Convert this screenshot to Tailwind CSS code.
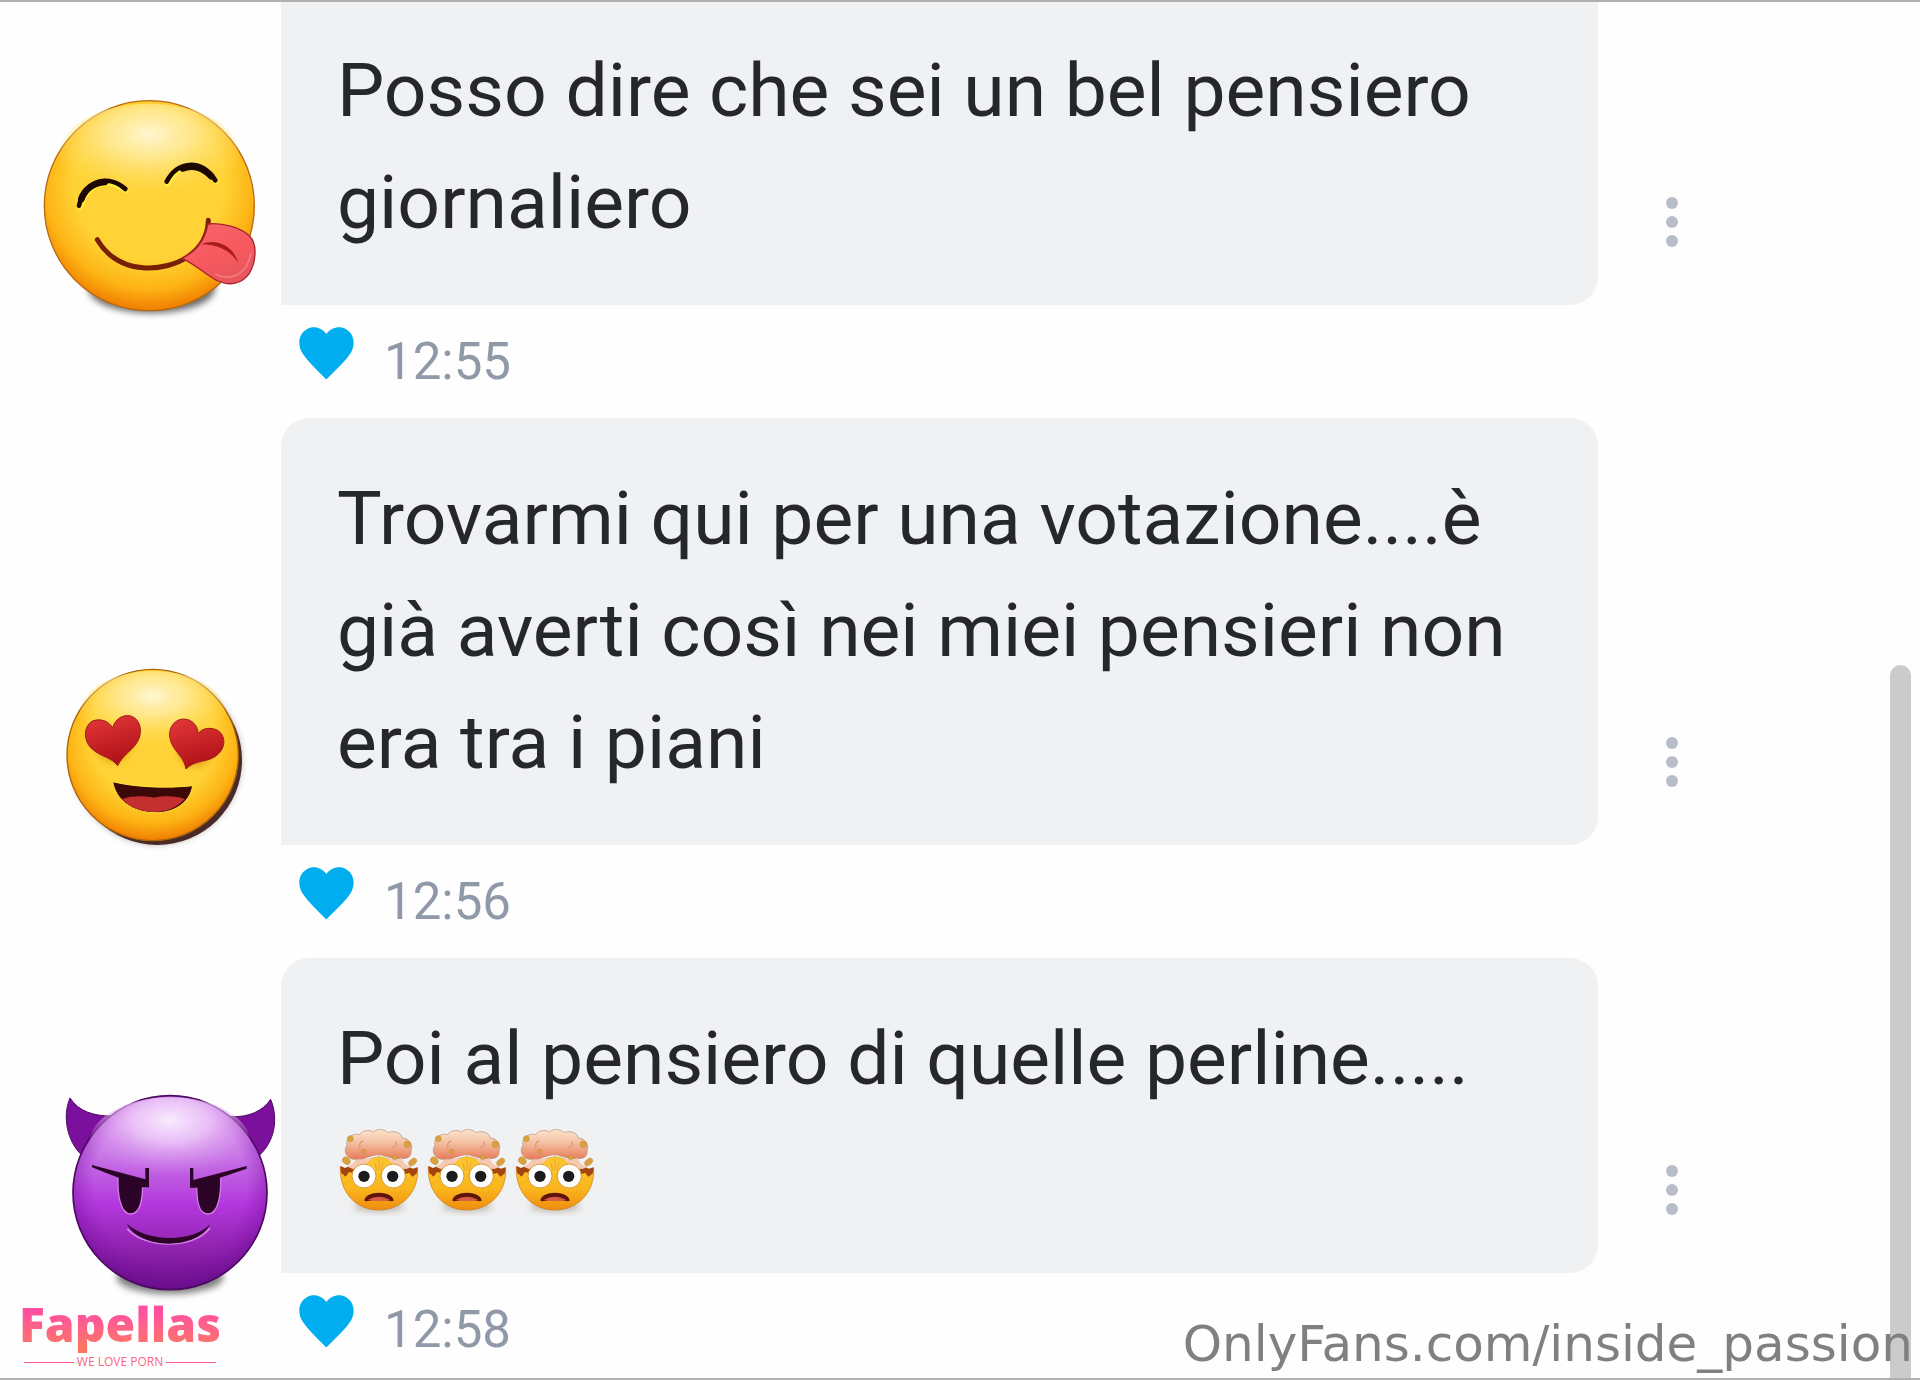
<!DOCTYPE html>
<html lang="it">
  <head>
    <meta charset="UTF-8" />
    <meta name="viewport" content="width=device-width, initial-scale=1.0">
    <title>Chat</title>
    <script src="https://cdn.jsdelivr.net/npm/@tailwindcss/browser@4"></script>
  </head>
  <body class="bg-[#fefefe] font-[Roboto,sans-serif] text-[#25272b]">
    <!-- shared shapes -->
    <svg class="absolute size-0" aria-hidden="true">
      <defs>
        <radialGradient id="face" cx=".5" cy=".4" r=".62">
          <stop offset="0" stop-color="#ffd338" />
          <stop offset=".58" stop-color="#ffd235" />
          <stop offset=".8" stop-color="#fdb414" />
          <stop offset=".97" stop-color="#f07c00" />
        </radialGradient>
        <radialGradient id="shine" cx=".5" cy=".3" r=".6">
          <stop offset="0" stop-color="#fff6d2" />
          <stop offset=".4" stop-color="#ffeea6" stop-opacity=".75" />
          <stop offset="1" stop-color="#ffe160" stop-opacity="0" />
        </radialGradient>
        <linearGradient id="tongue" x1="0" y1="0" x2=".4" y2="1">
          <stop offset="0" stop-color="#f4666c" />
          <stop offset=".6" stop-color="#f8595f" />
          <stop offset="1" stop-color="#e8565c" />
        </linearGradient>
        <linearGradient id="red" x1="0" y1="0" x2=".3" y2="1">
          <stop offset="0" stop-color="#e5383b" />
          <stop offset="1" stop-color="#b01218" />
        </linearGradient>
        <linearGradient id="purple" x1="0" y1="0" x2="0" y2="1">
          <stop offset="0" stop-color="#d58cec" />
          <stop offset=".3" stop-color="#c875e6" />
          <stop offset=".57" stop-color="#b236dc" />
          <stop offset=".8" stop-color="#8e22ac" />
          <stop offset="1" stop-color="#651080" />
        </linearGradient>
        <radialGradient id="purpleEdge" cx=".5" cy=".45" r=".56">
          <stop offset=".7" stop-color="#8a12b8" stop-opacity="0" />
          <stop offset="1" stop-color="#6a0a90" stop-opacity=".65" />
        </radialGradient>
        <radialGradient id="purpleShine" cx=".5" cy=".26" r=".62">
          <stop offset="0" stop-color="#f9ecff" />
          <stop offset=".4" stop-color="#efcdfa" stop-opacity=".8" />
          <stop offset="1" stop-color="#d58cec" stop-opacity="0" />
        </radialGradient>
        <linearGradient id="smoke" x1="0" y1="0" x2="0" y2="1">
          <stop offset="0" stop-color="#fbe6cf" />
          <stop offset=".45" stop-color="#f3bfa1" />
          <stop offset="1" stop-color="#e77a58" />
        </linearGradient>
        <linearGradient id="bowl" x1="0" y1="0" x2="0" y2="1">
          <stop offset="0" stop-color="#fdc52c" />
          <stop offset=".6" stop-color="#fbb61d" />
          <stop offset="1" stop-color="#ee8c10" />
        </linearGradient>
        <filter id="soft" x="-20%" y="-30%" width="140%" height="160%">
          <feGaussianBlur stdDeviation="11" />
        </filter>
        <symbol id="heart" viewBox="55 81 167 160">
          <path fill="#00aeef" d="M138 102C124 82 98 76 79 87C52 101 50 137 66 161C80 183 108 209 138 240C168 209 197 183 211 161C227 137 224 101 198 87C178 76 152 82 138 102Z" />
        </symbol>
        <symbol id="dots" viewBox="0 0 14 52">
          <g fill="#b8bec8">
            <circle cx="7" cy="7" r="6" /><circle cx="7" cy="26" r="6" /><circle cx="7" cy="45" r="6" />
          </g>
        </symbol>
        <symbol id="mindblown" viewBox="54 12 264 336">
          <ellipse cx="180" cy="288" rx="75" ry="17" fill="#8b7b68" opacity=".5" filter="url(#soft)" />
          <path fill="url(#bowl)" stroke="#c77a14" stroke-width="2" d="M64 170L84 182L112 172L140 150L180 140L222 150L254 172L276 184L296 174C300 246 250 300 180 300C110 300 60 246 64 170Z" />
          <path fill="#a4440f" d="M64 168L78 174L88 170L102 178L116 176L104 190L90 186L80 200L66 188ZM296 172L282 176L268 170L254 178L246 182L260 192L270 188L280 200L294 190Z" />
          <path fill="#f6c9b2" d="M84 168Q104 164 112 146L250 146Q254 164 276 170Q262 182 244 174L116 172Q98 180 84 168Z" />
          <path fill="url(#smoke)" stroke="#b98a6c" stroke-width="2" d="M104 148C82 146 72 122 84 106C78 82 104 68 122 74C132 58 156 60 164 66C176 54 200 58 206 68C228 60 248 70 250 84C272 86 284 106 276 122C280 138 262 150 244 144C226 150 212 140 196 138C176 128 150 142 132 146Z" />
          <path fill="#fdc52c" d="M140 162Q158 142 182 140Q206 142 222 162L208 190L156 190Z" />
          <path fill="none" stroke="#dc8b3c" stroke-width="2" d="M168 158L173 182M180 152V182M192 158L187 182" />
          <path fill="none" stroke="#e09a78" stroke-width="4" d="M132 92Q116 100 124 118M230 94Q238 106 222 112" />
          <g fill="#d9a23c" stroke="#b07d2a">
            <circle cx="94" cy="86" r="9" /><circle cx="265" cy="103" r="10" /><circle cx="134" cy="124" r="7" /><circle cx="227" cy="142" r="7" />
            <ellipse cx="82" cy="152" rx="13" ry="10" transform="rotate(40 82 152)" /><ellipse cx="281" cy="156" rx="14" ry="9" transform="rotate(-40 281 156)" />
          </g>
          <g fill="#fff" stroke="#d49a3c" stroke-width="3">
            <circle cx="135" cy="198" r="36" /><circle cx="223" cy="198" r="36" />
          </g>
          <circle cx="135" cy="199" r="17" fill="#1c1c1e" /><circle cx="221" cy="199" r="17" fill="#1c1c1e" />
          <path fill="#5e1408" d="M136 272C138 240 222 240 224 272C216 276 208 270 180 270C152 270 144 276 136 272Z" />
          <path fill="#d45a4a" d="M146 270Q180 250 214 270Q180 276 146 270Z" />
        </symbol>
      </defs>
    </svg>

    <main class="relative h-screen overflow-hidden border-y-2 border-[#b0b0b0]">
      <article>
        <div class="flex">
          <svg class="h-[240px] w-[281px] shrink-0 self-end overflow-visible" viewBox="0 0 281 240" role="img" aria-label="Faccina con la lingua">
            <g transform="translate(0 -4) scale(.33333)">
              <ellipse cx="455" cy="682" rx="190" ry="74" fill="#000" opacity=".6" filter="url(#soft)" />
              <circle cx="448" cy="434" r="315" fill="url(#face)" stroke="#b96a10" stroke-width="4" />
              <ellipse cx="448" cy="280" rx="270" ry="152" fill="url(#shine)" />
              <g fill="none" stroke-linecap="round">
                <path stroke="#ffee3c" stroke-width="16" d="M242 438C262 362 330 350 378 390M502 370C530 306 602 298 648 362" />
                <path stroke="#1c0800" stroke-width="14" d="M237 434C256 354 328 340 376 384M500 362C532 300 602 292 646 358" />
                <path stroke="#1c0800" stroke-width="20" d="M244 414C256 382 284 366 314 363M548 322C582 308 614 324 634 346" />
                <path stroke="#782006" stroke-width="15" d="M292 536C360 650 500 630 562 588C604 560 624 520 625 478" />
              </g>
              <path fill="url(#tongue)" stroke="#a82230" stroke-width="4" d="M624 489C668 484 720 500 748 524C774 550 768 606 746 640C724 668 690 676 654 660C616 642 590 612 546 592C592 570 616 530 624 489Z" />
              <path fill="none" stroke="#f98d90" stroke-width="6" stroke-linecap="round" opacity=".6" d="M648 640C700 664 742 634 752 580" />
              <path fill="#a81c1c" d="M604 550C650 530 700 556 714 604C690 570 660 552 604 550Z" />
            </g>
          </svg>
          <p class="min-w-0 flex-1 rounded-br-[28px] bg-[#f0f1f3] px-14 pt-8 pb-[47px] text-[75px] leading-[112px]">Posso dire che sei un bel pensiero giornaliero</p>
          <div class="flex w-[322px] shrink-0 items-end pb-[57px] pl-[67px]">
            <button type="button" aria-label="Opzioni messaggio"><svg class="h-[52px] w-[14px]"><use href="#dots" /></svg></button>
          </div>
        </div>
        <footer class="ml-[281px] flex h-[113px] items-center gap-[30px] pl-[18px]">
          <button type="button" class="pb-4" aria-label="Mi piace"><svg class="h-[53px] w-[55px]"><use href="#heart" /></svg></button>
          <time class="text-[51px] leading-none text-[#8f99a8]">12:55</time>
        </footer>
      </article>

      <article>
        <div class="flex">
          <svg class="h-[240px] w-[281px] shrink-0 self-end overflow-visible" viewBox="0 0 281 240" role="img" aria-label="Faccina innamorata">
            <g transform="translate(40 36) scale(.33333)">
              <circle cx="350" cy="356" r="252" fill="#2c1010" opacity=".4" filter="url(#soft)" />
              <circle cx="352" cy="358" r="254" fill="#4a2a26" />
              <circle cx="338" cy="342" r="257" fill="url(#face)" stroke="#a8640c" stroke-width="4" />
              <ellipse cx="338" cy="214" rx="218" ry="124" fill="url(#shine)" />
              <g fill="#c77a10" opacity=".55" filter="url(#soft)">
                <circle cx="220" cy="310" r="52" /><circle cx="466" cy="324" r="52" />
              </g>
              <path fill="url(#red)" stroke="#9c2018" stroke-width="3" d="M218 262C225 230 258 214 283 230C308 248 306 288 286 312C270 332 248 344 233 374C214 348 178 346 154 322C130 300 130 256 156 241C180 230 208 240 218 262Z" />
              <path fill="url(#red)" stroke="#9c2018" stroke-width="3" d="M475 278C472 246 446 228 418 236C388 248 382 282 396 310C408 336 432 350 438 384C466 354 510 366 536 338C560 314 556 276 526 265C504 258 484 264 475 278Z" />
              <path fill="#3c0808" stroke="#ffe23c" stroke-width="3" d="M218 422C290 440 390 442 458 434C450 486 400 518 342 515C280 514 228 480 218 422Z" />
              <path fill="#c43030" d="M246 474C280 462 320 466 342 470C370 464 410 464 434 474C410 504 370 514 342 513C306 512 268 500 246 474Z" />
            </g>
          </svg>
          <p class="min-w-0 flex-1 rounded-t-[28px] rounded-br-[28px] bg-[#f0f1f3] px-14 pt-11 pb-[47px] text-[75px] leading-[112px]">Trovarmi qui per una votazione....è già averti così nei miei pensieri non era tra i piani</p>
          <div class="flex w-[322px] shrink-0 items-end pb-[57px] pl-[67px]">
            <button type="button" aria-label="Opzioni messaggio"><svg class="h-[52px] w-[14px]"><use href="#dots" /></svg></button>
          </div>
        </div>
        <footer class="ml-[281px] flex h-[113px] items-center gap-[30px] pl-[18px]">
          <button type="button" class="pb-4" aria-label="Mi piace"><svg class="h-[53px] w-[55px]"><use href="#heart" /></svg></button>
          <time class="text-[51px] leading-none text-[#8f99a8]">12:56</time>
        </footer>
      </article>

      <article>
        <div class="flex">
          <svg class="h-[240px] w-[281px] shrink-0 self-end overflow-visible" viewBox="0 0 281 240" role="img" aria-label="Diavoletto">
            <g transform="translate(40 37) scale(.33333)">
              <ellipse cx="390" cy="622" rx="160" ry="50" fill="#000" opacity=".5" filter="url(#soft)" />
              <path fill="#7a109c" stroke="#4b0a60" stroke-width="3" d="M90 84C116 124 160 138 214 138L124 254C82 214 66 140 90 84ZM692 88C668 124 626 142 572 140L658 256C704 214 716 146 692 88Z" />
              <circle cx="390" cy="368" r="291" fill="url(#purple)" />
              <circle cx="390" cy="368" r="291" fill="url(#purpleEdge)" stroke="#4b0a60" stroke-width="5" />
              <ellipse cx="390" cy="216" rx="240" ry="134" fill="url(#purpleShine)" />
              <g fill="#2c0428" stroke="#d57bea" stroke-width="4">
                <path d="M234 318L308 340C308 390 302 432 272 432C240 432 232 370 234 318Z" />
                <path d="M542 318L470 340C470 390 474 432 504 432C536 432 544 370 542 318Z" />
              </g>
              <path fill="#2c0428" d="M156 285L316 328V294H327V352H306L232 322Q190 306 156 292ZM620 288L460 330V294H450V353H470L544 322Q590 306 620 296Z" />
              <path fill="none" stroke="#d884ec" stroke-width="5" d="M262 476C312 536 462 538 510 474" />
              <path fill="#2c0428" d="M260 460C312 516 460 520 510 463C472 540 300 542 260 460Z" />
            </g>
          </svg>
          <p class="min-w-0 flex-1 rounded-t-[28px] rounded-br-[28px] bg-[#f0f1f3] px-14 pt-11 pb-[47px] text-[75px] leading-[112px]">
            Poi al pensiero di quelle perline.....
            <span class="inline-flex align-top" role="img" aria-label="Testa che esplode, tre volte">
              <svg class="h-[112px] w-[88px]"><use href="#mindblown" /></svg>
              <svg class="h-[112px] w-[88px]"><use href="#mindblown" /></svg>
              <svg class="h-[112px] w-[88px]"><use href="#mindblown" /></svg>
            </span>
          </p>
          <div class="flex w-[322px] shrink-0 items-end pb-[57px] pl-[67px]">
            <button type="button" aria-label="Opzioni messaggio"><svg class="h-[52px] w-[14px]"><use href="#dots" /></svg></button>
          </div>
        </div>
        <footer class="ml-[281px] flex h-[113px] items-center gap-[30px] pl-[18px]">
          <button type="button" class="pb-4" aria-label="Mi piace"><svg class="h-[53px] w-[55px]"><use href="#heart" /></svg></button>
          <time class="text-[51px] leading-none text-[#8f99a8]">12:58</time>
        </footer>
      </article>

      <!-- scrollbar thumb -->
      <div class="absolute right-[9px] bottom-0 h-[713px] w-[21px] rounded-t-full bg-[#cbcbcb]"></div>

      <!-- watermarks -->
      <div class="absolute bottom-2 left-4 flex w-[208px] flex-col items-center">
        <p class="bg-gradient-to-b from-[#ff4fa0] from-30% to-[#fb7660] to-90% bg-clip-text font-['Noto_Sans',sans-serif] text-[48px] leading-[60px] font-black text-transparent">Fapellas</p>
        <p class="flex w-full items-center gap-[3px] px-2 font-['Open_Sans',sans-serif] text-[12px] leading-4 whitespace-nowrap text-[#fb6484]">
          <span class="h-px flex-1 bg-[#fb5c8c]"></span>WE LOVE PORN<span class="h-px flex-1 bg-[#fb5c8c]"></span>
        </p>
      </div>
      <p class="absolute right-[7px] bottom-1 font-['DejaVu_Sans',sans-serif] text-[50px] leading-[60px] text-[#808080]">OnlyFans.com/inside_passion</p>
    </main>
  </body>
</html>
